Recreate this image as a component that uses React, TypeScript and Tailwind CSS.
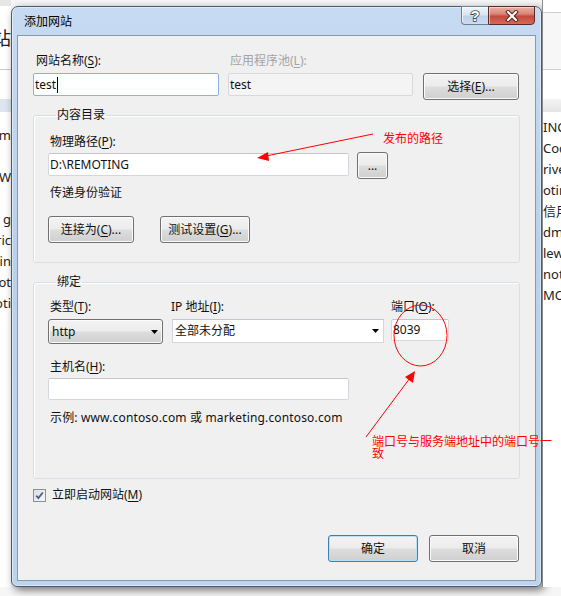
import React from "react";

type Kids = { children?: React.ReactNode };

const font = "font-['Noto_Sans','Noto_Sans_CJK_SC',sans-serif]";

const leftRows = ["em", "", "W", "", "g", "ric", "in", "ot", "oti"];
const rightRows = ["INC", "Cod", "rive", "otin", "信用", "dm", "lew", "not", "MOT"];

const U = ({ children }: Kids) => (
  <span className="underline decoration-1 underline-offset-[2px]">{children}</span>
);

const Label = ({ children, className = "" }: Kids & { className?: string }) => (
  <div className={`h-[16px] leading-[16px] text-[12px] whitespace-nowrap ${className}`}>{children}</div>
);

const WinButton = ({
  children,
  className = "",
  focused = false,
}: Kids & { className?: string; focused?: boolean }) => (
  <div
    className={`flex h-[27px] shrink-0 items-center justify-center rounded-[3px] border text-[12px] text-[#111] bg-[linear-gradient(to_bottom,#f3f3f3_0%,#ececec_48%,#dddddd_52%,#cfcfcf_100%)] ${
      focused
        ? "border-[#3c7fb1] shadow-[inset_0_0_0_1px_#b6e2f8]"
        : "border-[#707070] shadow-[inset_0_0_0_1px_#fbfbfb]"
    } ${className}`}
  >
    {children}
  </div>
);

const TextBox = ({
  value,
  className = "",
  focused = false,
  disabled = false,
}: {
  value?: string;
  className?: string;
  focused?: boolean;
  disabled?: boolean;
}) => (
  <div
    className={`flex shrink-0 items-center rounded-[2px] border pl-[1px] text-[12px] ${
      focused
        ? "border-[#8db2df] bg-white"
        : disabled
        ? "border-[#d9d9d9] bg-[#f4f4f4]"
        : "border-[#d4d8de] border-t-[#c2c6cc] bg-white"
    } ${className}`}
  >
    <span className="whitespace-nowrap">{value}</span>
    {focused && <span className="ml-[1px] h-[16px] w-[1px] bg-black" />}
  </div>
);

const Arrow = () => (
  <svg width="7" height="4" viewBox="0 0 7 4" className="shrink-0">
    <path d="M0 0H7L3.5 4Z" fill="#000" />
  </svg>
);

const Group = ({ title, children, className = "" }: Kids & { title: string; className?: string }) => (
  <fieldset className={`rounded-[3px] border border-[#d5dfe5] shadow-[inset_1px_1px_0_#fff] ${className}`}>
    <legend className="ml-[8px] px-[1px] h-[16px] leading-[16px] text-[12px]">{title}</legend>
    {children}
  </fieldset>
);

function TitleBar() {
  return (
    <div className="flex h-[28px] shrink-0 items-start">
      <div className="pl-[7px] pt-[7px] text-[12px] leading-[16px] text-black">添加网站</div>
      <div className="ml-auto mr-[1px] -mt-[1px] flex">
        <div className="flex h-[19px] w-[27px] items-center justify-center rounded-bl-[4px] border border-r-0 border-[#6f7f92] bg-[linear-gradient(to_bottom,#eef4fb_0%,#d9e5f3_45%,#bfd1e8_55%,#cddcee_100%)] shadow-[inset_1px_1px_0_rgba(255,255,255,0.7)]">
          <svg width="12" height="15" viewBox="0 0 12 15">
            <text
              x="6"
              y="13"
              textAnchor="middle"
              fontSize="15"
              fontWeight="bold"
              fontFamily="Liberation Sans, sans-serif"
              fill="#fff"
              stroke="#3d4a5a"
              strokeWidth="1.6"
              paintOrder="stroke"
            >
              ?
            </text>
          </svg>
        </div>
        <div className="flex h-[19px] w-[47px] items-center justify-center rounded-br-[4px] border border-[#5b2a26] bg-[linear-gradient(to_bottom,#eab0a6_0%,#d98779_40%,#c44a3d_55%,#d66a57_100%)] shadow-[inset_1px_1px_0_rgba(255,230,225,0.6)]">
          <svg width="14" height="12" viewBox="0 0 14 12">
            <path d="M3 2L11 10M11 2L3 10" stroke="#4a1f1b" strokeWidth="4" strokeLinecap="square" />
            <path d="M3 2L11 10M11 2L3 10" stroke="#fff" strokeWidth="2.2" strokeLinecap="square" />
          </svg>
        </div>
      </div>
    </div>
  );
}

function Client() {
  return (
    <div className="flex h-[546px] flex-col border border-[#8799ad] bg-[#f0f0f0] px-[15px] pt-[17px] text-[#111]">
      {/* site name row */}
      <div className="flex">
        <Label className="w-[195px] pl-[3px]">
          网站名称(<U>S</U>):
        </Label>
        <Label className="pl-[2px] text-[#a3a3a3]">
          应用程序池(<U>L</U>):
        </Label>
      </div>
      <div className="mt-[4px] flex items-start">
        <TextBox value="test" focused className="h-[23px] w-[186px]" />
        <TextBox value="test" disabled className="ml-[9px] h-[23px] w-[185px]" />
        <WinButton className="ml-[10px] w-[96px]">
          选择(<U>E</U>)...
        </WinButton>
      </div>

      <Group title="内容目录" className="mt-[7px] px-[14px] pb-[19px] pt-[11px]">
        <Label className="pl-[2px]">
          物理路径(<U>P</U>):
        </Label>
        <div className="mt-[2px] flex items-start">
          <TextBox value="D:\REMOTING" className="mt-[1px] h-[23px] w-[301px]" />
          <WinButton className="ml-[8px] w-[31px] text-[11px]">...</WinButton>
        </div>
        <Label className="mt-[6px] pl-[2px]">传递身份验证</Label>
        <div className="mt-[15px] flex">
          <WinButton className="w-[86px]">
            连接为(<U>C</U>)...
          </WinButton>
          <WinButton className="ml-[26px] w-[90px]">
            测试设置(<U>G</U>)...
          </WinButton>
        </div>
      </Group>

      <Group title="绑定" className="mt-[11px] h-[205px] px-[14px] pt-[9px]">
        <div className="flex items-start">
          <div className="w-[124px]">
            <Label className="pl-[2px]">
              类型(<U>T</U>):
            </Label>
            <div className="mt-[4px] flex h-[25px] w-[115px] items-center rounded-[3px] border border-[#707070] bg-[linear-gradient(to_bottom,#f3f3f3_0%,#ececec_48%,#dddddd_52%,#cfcfcf_100%)] pl-[3px] pr-[4px] text-[12px] shadow-[inset_0_0_0_1px_#fbfbfb]">
              <span>http</span>
              <span className="ml-auto">
                <Arrow />
              </span>
            </div>
          </div>
          <div className="w-[219px]">
            <Label className="-ml-[1px]">
              IP 地址(<U>I</U>):
            </Label>
            <div className="mt-[4px] flex h-[24px] w-[212px] items-center border border-[#d4d8de] border-t-[#c2c6cc] bg-white pl-[2px] pr-[4px] text-[12px]">
              <span>全部未分配</span>
              <span className="ml-auto">
                <Arrow />
              </span>
            </div>
          </div>
          <div>
            <Label>
              端口(<U>O</U>):
            </Label>
            <TextBox value="8039" className="mt-[4px] h-[22px] w-[58px]" />
          </div>
        </div>
        <Label className="mt-[15px] pl-[2px]">
          主机名(<U>H</U>):
        </Label>
        <TextBox className="mt-[3px] h-[22px] w-[301px]" />
        <Label className="mt-[10px] pl-[2px] tracking-[0.15px]">
          示例: www.contoso.com 或 marketing.contoso.com
        </Label>
      </Group>

      <div className="mt-[8px] flex h-[16px] items-center">
        <div className="flex h-[13px] w-[13px] items-center justify-center border border-[#8e8f8f] bg-[linear-gradient(135deg,#dcdfe4,#f6f6f6)]">
          <svg width="9" height="9" viewBox="0 0 9 9">
            <path d="M1.2 4.6L3.4 7L7.8 1.5" stroke="#4a5d8c" strokeWidth="1.8" fill="none" />
          </svg>
        </div>
        <Label className="ml-[6px]">
          立即启动网站(<U>M</U>)
        </Label>
      </div>

      <div className="mt-[32px] flex justify-end pr-[1px]">
        <WinButton focused className="w-[90px]">
          确定
        </WinButton>
        <WinButton className="ml-[11px] w-[90px]">取消</WinButton>
      </div>
    </div>
  );
}

function Annotations() {
  return (
    <div className="pointer-events-none absolute inset-0">
      <svg width="561" height="596" className="absolute left-0 top-0">
        <line x1="373" y1="134" x2="266" y2="156" stroke="#ff0000" strokeWidth="1" />
        <path d="M257 158L268 152L269 161Z" fill="#ff0000" />
        <ellipse cx="420.5" cy="335.5" rx="26.5" ry="30.5" stroke="#ff0000" strokeWidth="1" fill="none" />
        <line x1="366" y1="437" x2="410" y2="378" stroke="#ff0000" strokeWidth="1" />
        <path d="M415 371L413 383L405 377Z" fill="#ff0000" />
      </svg>
      <div className="absolute left-[383px] top-[131px] text-[12px] leading-[16px] text-[#ff0000]">发布的路径</div>
      <div className="absolute left-[372px] top-[436px] w-[189px] text-[12px] leading-[12px] text-[#ff0000]">
        端口号与服务端地址中的端口号一致
      </div>
    </div>
  );
}

export default function App() {
  return (
    <div className={`relative flex h-[596px] w-[561px] overflow-hidden bg-[#f6f6f6] ${font}`}>
      {/* window behind, left strip */}
      <div className="flex h-[587px] w-[11px] shrink-0 flex-col overflow-hidden bg-white">
        <div className="h-[6px] bg-[#e6e6e6]" />
        <div className="flex h-[64px] items-center justify-end border-b border-[#c9c9c9]">
          <span className="shrink-0 text-[18px] leading-[20px] text-[#222]">站</span>
        </div>
        <div className="h-[29px]" />
        <div className="h-[13px] bg-[#dde6ef]" />
        <div className="h-[13px]" />
        {leftRows.map((t, i) => (
          <div key={i} className="flex h-[21px] items-center justify-end">
            <span className="shrink-0 whitespace-nowrap text-[13px] text-[#222]">{t}</span>
          </div>
        ))}
      </div>

      {/* dialog */}
      <div className="mt-[6px] flex h-[581px] w-[531px] shrink-0 flex-col rounded-t-[7px] rounded-b-[6px] border border-[#4b5b6d] bg-[linear-gradient(to_bottom,#c6dbf2,#b9d1ec_40%,#bcd4ee)] px-[5px] pb-[5px] shadow-[3px_3px_8px_rgba(0,0,0,0.55),inset_0_0_0_1px_rgba(255,255,255,0.45)]">
        <TitleBar />
        <Client />
      </div>

      {/* window behind, right strip */}
      <div className="flex h-[587px] w-[19px] shrink-0 flex-col overflow-hidden border-l border-[#8a8a8a] bg-white">
        <div className="h-[13px] border-b border-[#d0d0d0]" />
        <div className="h-[57px] border-b border-[#d0d0d0] bg-[#f7f7f7]" />
        <div className="h-[29px]" />
        <div className="h-[13px] bg-[linear-gradient(to_bottom,#f4f4f4,#e4e4e4)]" />
        <div className="h-[5px]" />
        {rightRows.map((t, i) => (
          <div key={i} className="flex h-[21px] items-center">
            <span className="shrink-0 whitespace-nowrap text-[13px] text-[#222]">{t}</span>
          </div>
        ))}
      </div>

      <Annotations />
    </div>
  );
}
